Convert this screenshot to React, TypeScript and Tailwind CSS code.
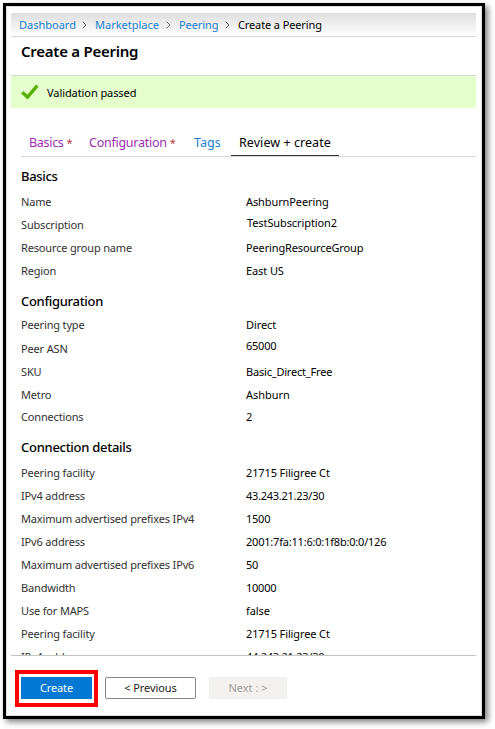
import React from "react";

type Row = { label: string; value: string; h: string; valueClass?: string };

const basics: Row[] = [
  { label: "Name", value: "AshburnPeering", h: "h-[23px]", valueClass: "tracking-[-0.1px]" },
  { label: "Subscription", value: "TestSubscription2", h: "h-[23px]", valueClass: "pb-1 pl-px tracking-[-0.1px]" },
  { label: "Resource group name", value: "PeeringResourceGroup", h: "h-[23px]", valueClass: "tracking-[-0.14px]" },
  { label: "Region", value: "East US", h: "h-[23px]", valueClass: "tracking-[-0.1px]" },
];

const configuration: Row[] = [
  { label: "Peering type", value: "Direct", h: "h-[23px]", valueClass: "tracking-[-0.1px]" },
  { label: "Peer ASN", value: "65000", h: "h-[25px]", valueClass: "pb-1.5 tracking-[-0.25px]" },
  { label: "SKU", value: "Basic_Direct_Free", h: "h-[22px]", valueClass: "tracking-[-0.2px]" },
  { label: "Metro", value: "Ashburn", h: "h-[23px]", valueClass: "tracking-[-0.04px]" },
  { label: "Connections", value: "2", h: "h-[22px]" },
];

const connection: Row[] = [
  { label: "Peering facility", value: "21715 Filigree Ct", h: "h-[23px]", valueClass: "tracking-[-0.12px]" },
  { label: "IPv4 address", value: "43.243.21.23/30", h: "h-[23px]", valueClass: "tracking-[-0.26px]" },
  { label: "Maximum advertised prefixes IPv4", value: "1500", h: "h-[23px]", valueClass: "tracking-[-0.24px]" },
  { label: "IPv6 address", value: "2001:7fa:11:6:0:1f8b:0:0/126", h: "h-[23px]", valueClass: "tracking-[-0.2px]" },
  { label: "Maximum advertised prefixes IPv6", value: "50", h: "h-[23px]", valueClass: "tracking-[-0.24px]" },
  { label: "Bandwidth", value: "10000", h: "h-[23px]", valueClass: "tracking-[-0.24px]" },
  { label: "Use for MAPS", value: "false", h: "h-[23px]", valueClass: "tracking-[-0.1px]" },
  { label: "Peering facility", value: "21715 Filigree Ct", h: "h-[23px]", valueClass: "tracking-[-0.12px]" },
  { label: "IPv4 address", value: "44.243.21.23/30", h: "h-[23px]", valueClass: "tracking-[-0.26px]" },
];

function Rows({ rows }: { rows: Row[] }) {
  return (
    <dl>
      {rows.map((r, i) => (
        <div key={i} className={`flex items-stretch ${r.h}`}>
          <dt className="flex w-[225px] items-center tracking-[-0.16px] text-[#323130]">{r.label}</dt>
          <dd className={`flex items-center text-black ${r.valueClass ?? ""}`}>{r.value}</dd>
        </div>
      ))}
    </dl>
  );
}

function Chevron() {
  return (
    <svg width="5" height="8" viewBox="0 0 5 8" fill="none" stroke="#666" strokeWidth="1">
      <path d="M0.7 0.7 L4 4 L0.7 7.3" />
    </svg>
  );
}

export default function App() {
  return (
    <div className="h-[729px] w-[495px] overflow-hidden bg-white pl-[3px] pt-[3px] font-['Noto_Sans',sans-serif] text-[11px] leading-[14px] whitespace-nowrap">
      <div className="flex h-[716px] w-[482px] flex-col border-[3px] border-black bg-white pl-[5px] pr-[6px] pt-[7px] shadow-[3px_3px_6px_rgba(0,0,0,0.5),inset_0_0_0_1px_#dcdcdc]">
        <nav className="flex h-6 shrink-0 items-center border-b border-[#d8d8d8] bg-linear-to-b from-[#dedede] to-white pl-2 text-[#2080d0]">
          <a className="w-[63px]">Dashboard</a>
          <Chevron />
          <a className="ml-2 w-[71px]">Marketplace</a>
          <Chevron />
          <a className="ml-2 w-[46px] tracking-[-0.1px]">Peering</a>
          <Chevron />
          <span className="ml-2 tracking-[-0.12px] text-black">Create a Peering</span>
        </nav>
        <h1 className="h-[38px] shrink-0 pl-[10px] pt-[4px] text-[15px] font-semibold leading-[21px] tracking-[-0.25px]">Create a Peering</h1>
        <div className="flex h-[33px] shrink-0 items-center border-t border-[#d4d9d0] bg-[#e4fecc] pl-[10px]">
          <svg width="18" height="16" viewBox="0 0 18 16" fill="none" stroke="#57b000" strokeWidth="3.4">
            <path d="M1.2 8.2 L6.5 13 L16.3 1.6" />
          </svg>
          <span className="ml-2 pt-0.5 tracking-[-0.08px]">Validation passed</span>
        </div>
        <div className="ml-[10px] mt-[22px] flex h-[27px] shrink-0 border-b border-[#d8d8d8] text-[12.5px] leading-[26px] text-[#9b2fae]">
          <span className="ml-[8px] w-[60px] tracking-[-0.3px]">Basics <span className="text-[11px] text-[#b83a3a]">*</span></span>
          <span className="w-[105px] tracking-[-0.26px]">Configuration <span className="text-[11px] text-[#b83a3a]">*</span></span>
          <span className="w-[37px] text-[#2080d0]">Tags</span>
          <span className="h-[26px] w-[108px] border-b border-[#333] pl-2 tracking-[0.06px] text-black">Review + create</span>
        </div>
        <main className="h-[499px] shrink-0 overflow-hidden border-b border-[#c4c4c4] pl-[10px]">
          <h2 className="h-[33px] pt-[10px] text-[13px] font-medium leading-[18px] tracking-[-0.34px]">Basics</h2>
          <Rows rows={basics} />
          <h2 className="h-[31px] pt-[10px] text-[13px] font-medium leading-[18px] tracking-[-0.3px]">Configuration</h2>
          <Rows rows={configuration} />
          <h2 className="h-[33px] pt-[10px] text-[13px] font-medium leading-[18px] tracking-[-0.28px]">Connection details</h2>
          <Rows rows={connection} />
        </main>
        <footer className="flex h-[60px] items-start pl-1 pt-[14px]">
          <div className="h-[37px] w-[83px] border-4 border-[#ff0000] p-[3px] pl-[2px]">
            <button className="flex h-[22px] w-[71px] items-center justify-center bg-[#0078d4] tracking-[-0.15px] text-white">Create</button>
          </div>
          <button className="ml-[7px] mt-[7px] flex h-[22px] w-[91px] items-center justify-center rounded-xs border border-[#8a8886] tracking-[-0.08px] text-[#222]">&lt; Previous</button>
          <button className="ml-[13px] mt-[7px] flex h-[22px] w-[78px] items-center justify-center bg-[#f2f1f0] text-[#a09e9c]">Next : &gt;</button>
        </footer>
      </div>
    </div>
  );
}
